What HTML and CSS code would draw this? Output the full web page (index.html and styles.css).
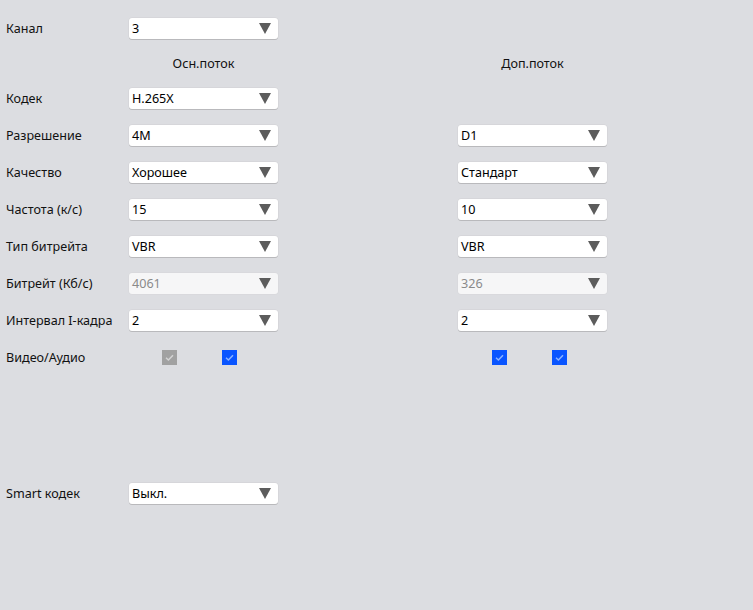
FILE: index.html
```html
<!DOCTYPE html>
<html>
<head>
<meta charset="utf-8">
<link rel="stylesheet" href="styles.css">
</head>
<body>
<div class="form">
  <div class="row">
    <div class="label">Канал</div>
    <div class="select"><span>3</span><i class="arrow"></i></div>
  </div>
  <div class="row head">
    <div class="label"></div>
    <div class="colhead">Осн.поток</div>
    <div class="spacer"></div>
    <div class="colhead">Доп.поток</div>
  </div>
  <div class="row">
    <div class="label">Кодек</div>
    <div class="select"><span>H.265X</span><i class="arrow"></i></div>
  </div>
  <div class="row">
    <div class="label">Разрешение</div>
    <div class="select"><span>4M</span><i class="arrow"></i></div>
    <div class="spacer"></div>
    <div class="select"><span>D1</span><i class="arrow"></i></div>
  </div>
  <div class="row">
    <div class="label">Качество</div>
    <div class="select"><span>Хорошее</span><i class="arrow"></i></div>
    <div class="spacer"></div>
    <div class="select"><span>Стандарт</span><i class="arrow"></i></div>
  </div>
  <div class="row">
    <div class="label">Частота (к/с)</div>
    <div class="select"><span>15</span><i class="arrow"></i></div>
    <div class="spacer"></div>
    <div class="select"><span>10</span><i class="arrow"></i></div>
  </div>
  <div class="row">
    <div class="label">Тип битрейта</div>
    <div class="select"><span>VBR</span><i class="arrow"></i></div>
    <div class="spacer"></div>
    <div class="select"><span>VBR</span><i class="arrow"></i></div>
  </div>
  <div class="row">
    <div class="label">Битрейт (Кб/с)</div>
    <div class="select disabled"><span>4061</span><i class="arrow"></i></div>
    <div class="spacer"></div>
    <div class="select disabled"><span>326</span><i class="arrow"></i></div>
  </div>
  <div class="row">
    <div class="label">Интервал I-кадра</div>
    <div class="select"><span>2</span><i class="arrow"></i></div>
    <div class="spacer"></div>
    <div class="select"><span>2</span><i class="arrow"></i></div>
  </div>
  <div class="row">
    <div class="label">Видео/Аудио</div>
    <div class="checks">
      <span class="cb gray"><svg viewBox="0 0 15 15"><path d="M4 7.8 L6.4 10 L11 5.2"/></svg></span>
      <span class="cb blue"><svg viewBox="0 0 15 15"><path d="M4 7.8 L6.4 10 L11 5.2"/></svg></span>
    </div>
    <div class="spacer"></div>
    <div class="checks sub">
      <span class="cb blue"><svg viewBox="0 0 15 15"><path d="M4 7.8 L6.4 10 L11 5.2"/></svg></span>
      <span class="cb blue"><svg viewBox="0 0 15 15"><path d="M4 7.8 L6.4 10 L11 5.2"/></svg></span>
    </div>
  </div>
  <div class="row smart">
    <div class="label">Smart кодек</div>
    <div class="select"><span>Выкл.</span><i class="arrow"></i></div>
  </div>
</div>
</body>
</html>
```
FILE: styles.css
```css
html, body {
  margin: 0;
  padding: 0;
  background: #dcdde1;
  width: 753px;
  height: 610px;
  overflow: hidden;
}
body {
  font-family: "Noto Sans", "Open Sans", sans-serif;
  font-size: 12.6px;
  color: #111;
}
.form {
  padding: 10px 0 0 6px;
  display: flex;
  flex-direction: column;
}
.row {
  display: flex;
  align-items: center;
  height: 37px;
}
.row.head {
  height: 33px;
}
.row.smart {
  margin-top: 99px;
}
.label {
  width: 123px;
  flex: none;
  white-space: nowrap;
}
.spacer {
  width: 180px;
  flex: none;
}
.colhead {
  width: 149px;
  flex: none;
  text-align: center;
  color: #111;
}
.select {
  width: 149px;
  height: 21px;
  flex: none;
  box-sizing: border-box;
  background: #fff;
  border-radius: 3px;
  box-shadow: 0 1px 0 #b9b9bc, 0 0 0 0.5px #d0d0d4;
  display: flex;
  align-items: center;
  justify-content: space-between;
  padding: 0 7px 0 3px;
  color: #000;
}
.select.disabled {
  background: #f6f6f7;
  color: #8a8a8a;
  box-shadow: 0 0 0 0.5px #d6d6d9;
}
.arrow {
  width: 0;
  height: 0;
  border-left: 6px solid transparent;
  border-right: 6px solid transparent;
  border-top: 11px solid #5c5c5c;
}
.checks {
  width: 149px;
  flex: none;
  display: flex;
  gap: 45px;
  padding-left: 33px;
  box-sizing: border-box;
}
.checks.sub {
  padding-left: 34px;
}
.cb {
  width: 15px;
  height: 15px;
  display: block;
}
.cb svg {
  width: 15px;
  height: 15px;
  display: block;
}
.cb path {
  fill: none;
  stroke-width: 1.5;
}
.cb.gray {
  background: #a1a1a1;
}
.cb.gray path {
  stroke: #d4d4d4;
}
.cb.blue {
  background: #0a55ff;
}
.cb.blue path {
  stroke: #8fb4ff;
}
```
